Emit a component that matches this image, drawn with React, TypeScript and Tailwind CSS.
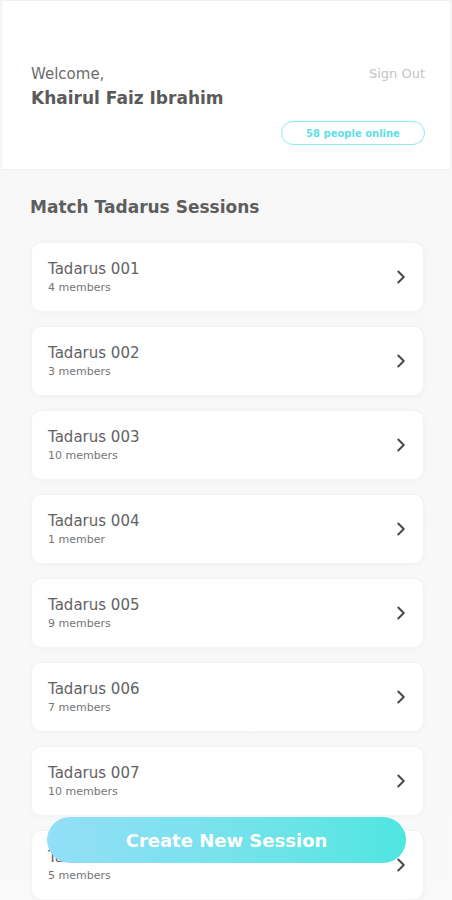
import { ChevronRight } from "lucide-react";

const sessions = [
  { name: "Tadarus 001", members: "4 members" },
  { name: "Tadarus 002", members: "3 members" },
  { name: "Tadarus 003", members: "10 members" },
  { name: "Tadarus 004", members: "1 member" },
  { name: "Tadarus 005", members: "9 members" },
  { name: "Tadarus 006", members: "7 members" },
  { name: "Tadarus 007", members: "10 members" },
  { name: "Tadarus 008", members: "5 members" },
];

export default function App() {
  return (
    <div className="min-h-screen w-full bg-gradient-to-b from-[#f7f7f7] to-[#f9f9f9] font-['DejaVu_Sans',sans-serif] pb-10">
      <div className="mx-[1px] h-[170px] bg-white border border-[#f1f1f1] pl-[29px] pr-[25px] pt-[62px] flex flex-col">
        <div className="flex justify-between">
          <div>
            <p className="text-[15px] text-[#6b6b6b] leading-[22px]">Welcome,</p>
            <p className="text-[17px] font-semibold text-[#5a5a5a] leading-[26px]">Khairul Faiz Ibrahim</p>
          </div>
          <button className="text-[13px] text-[#c4c4c4] leading-[22px] self-start">Sign Out</button>
        </div>
        <div className="flex justify-end mt-[10px]">
          <span className="h-[24px] w-[144px] rounded-full border border-[#8eeaf0] text-[#5fdfe8] text-[10px] font-semibold flex items-center justify-center">
            58 people online
          </span>
        </div>
      </div>

      <h2 className="mt-[25px] px-[30px] text-[17px] font-semibold text-[#5e5e5e]">Match Tadarus Sessions</h2>

      <div className="mt-[21px] pl-[31px] pr-[28px] flex flex-col gap-[14px]">
        {sessions.map((s) => (
          <div
            key={s.name}
            className="h-[70px] rounded-[10px] bg-white shadow-[0_1px_4px_rgba(0,0,0,0.03)] border border-[#f3f3f3] pl-[16px] pr-[11px] flex items-center justify-between"
          >
            <div>
              <p className="text-[15px] text-[#626262] leading-[22px]">{s.name}</p>
              <p className="text-[11px] text-[#757575] leading-[16px]">{s.members}</p>
            </div>
            <ChevronRight className="size-[22px] text-[#4a4a4a]" strokeWidth={2.2} />
          </div>
        ))}
      </div>

      <div className="fixed left-[47px] bottom-[37px] w-[359px]">
        <button className="h-[46px] w-full rounded-full bg-gradient-to-r from-[#93def8] to-[#4ee6e0] text-white text-[18px] font-semibold">
          Create New Session
        </button>
      </div>
    </div>
  );
}
